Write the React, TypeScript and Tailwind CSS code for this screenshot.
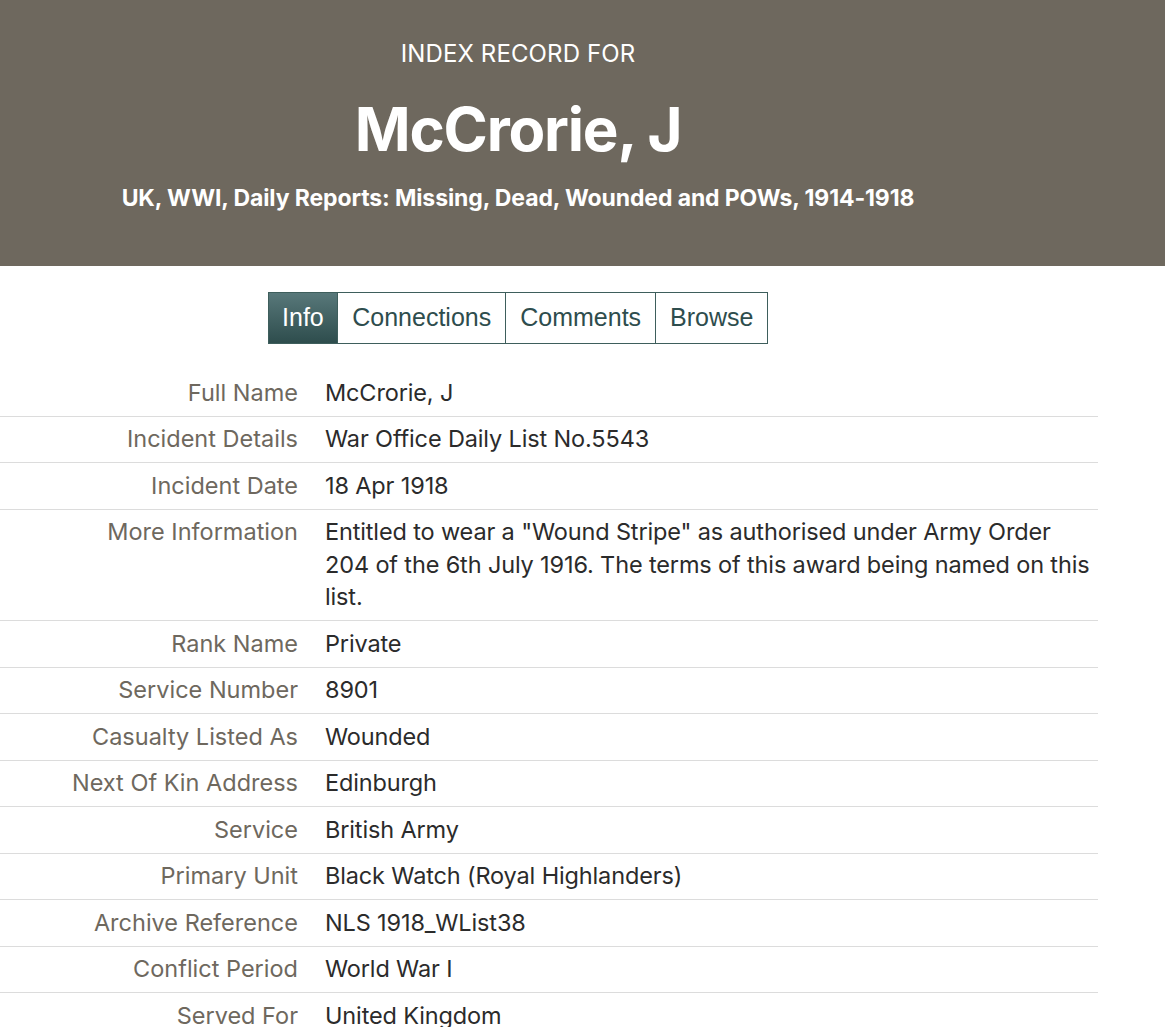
import React from "react";

type Row = { label: string; value: string };

const rows: Row[] = [
  { label: "Full Name", value: "McCrorie, J" },
  { label: "Incident Details", value: "War Office Daily List No.5543" },
  { label: "Incident Date", value: "18 Apr 1918" },
  {
    label: "More Information",
    value:
      'Entitled to wear a "Wound Stripe" as authorised under Army Order 204 of the 6th July 1916. The terms of this award being named on this list.',
  },
  { label: "Rank Name", value: "Private" },
  { label: "Service Number", value: "8901" },
  { label: "Casualty Listed As", value: "Wounded" },
  { label: "Next Of Kin Address", value: "Edinburgh" },
  { label: "Service", value: "British Army" },
  { label: "Primary Unit", value: "Black Watch (Royal Highlanders)" },
  { label: "Archive Reference", value: "NLS 1918_WList38" },
  { label: "Conflict Period", value: "World War I" },
  { label: "Served For", value: "United Kingdom" },
];

const tabs = ["Info", "Connections", "Comments", "Browse"];

const App = () => {
  return (
    <div className="min-h-screen bg-white font-['Inter',sans-serif]">
      <header className="bg-[#6e685e] h-[266px] text-white">
        <div className="w-[1036px] flex flex-col items-center pt-[38px]">
          <p className="text-[24px] leading-[32px] tracking-[0.005em]">
            INDEX RECORD FOR
          </p>
          <h1 className="mt-[24px] text-[60px] leading-[70px] font-bold tracking-[-0.02em]">
            McCrorie, J
          </h1>
          <p className="mt-[18px] text-[23px] leading-[32px] font-bold tracking-[-0.005em]">
            UK, WWI, Daily Reports: Missing, Dead, Wounded and POWs, 1914-1918
          </p>
        </div>
      </header>

      <nav className="w-[1036px] flex justify-center pt-[26px] pb-[26px]">
        <div className="flex border border-[#3e5e5c] font-['Liberation_Sans',sans-serif]">
          {tabs.map((t, i) => (
            <button
              key={t}
              className={`h-[50px] text-[25px] ${
                i === 0
                  ? "bg-gradient-to-b from-[#58787a] to-[#2e4d4d] text-white px-[13.5px]"
                  : "bg-white text-[#2e4d4d] border-l border-[#3e5e5c] px-[14px]"
              }`}
            >
              {t}
            </button>
          ))}
        </div>
      </nav>

      <div className="w-[1098px]">
        {rows.map((r, i) => (
          <div
            key={r.label}
            className={`flex py-[6.5px] text-[23.5px] leading-[32.5px] ${
              i < rows.length - 1 ? "border-b border-[#dcdcdc]" : ""
            }`}
          >
            <div className="w-[298px] shrink-0 text-right text-[#6e685e]">
              {r.label}
            </div>
            <div className="pl-[27px] pr-[2px] text-[#2b2b2b] tracking-[-0.006em]">
              {r.value}
            </div>
          </div>
        ))}
      </div>
    </div>
  );
};

export default App;
